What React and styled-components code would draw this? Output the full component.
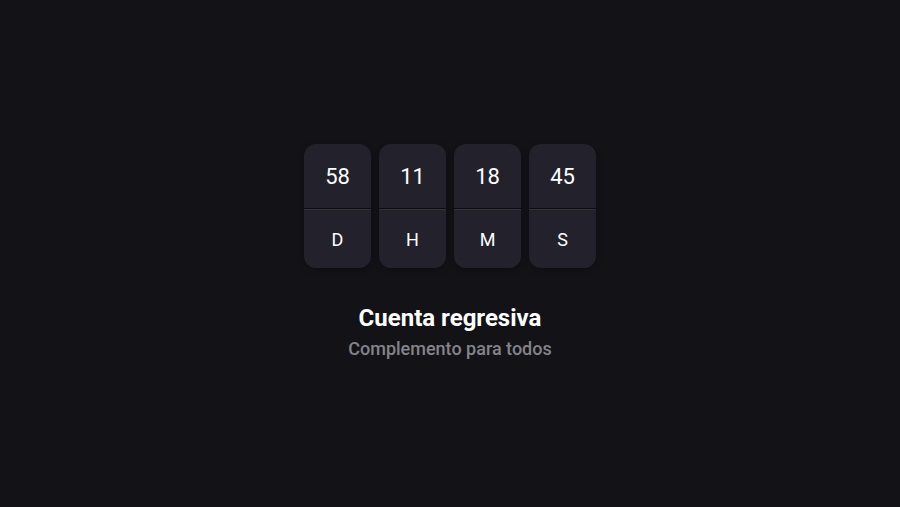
import React from "react";
import styled, { createGlobalStyle } from "styled-components";

const GlobalStyle = createGlobalStyle`
  html, body {
    margin: 0;
    padding: 0;
    background: #131217;
    font-family: Roboto, "Liberation Sans", sans-serif;
  }
`;

const units = [
  { value: "58", label: "D" },
  { value: "11", label: "H" },
  { value: "18", label: "M" },
  { value: "45", label: "S" },
];

const App = () => {
  return (
    <>
      <GlobalStyle />
      <Page>
        <Counter>
          {units.map((u) => (
            <Card key={u.label}>
              <Value>{u.value}</Value>
              <Label>{u.label}</Label>
            </Card>
          ))}
        </Counter>
        <Title>Cuenta regresiva</Title>
        <Subtitle>Complemento para todos</Subtitle>
      </Page>
    </>
  );
};

const Page = styled.div`
  min-height: 100vh;
  display: flex;
  flex-direction: column;
  align-items: center;
  justify-content: center;
  padding-bottom: 3px;
  box-sizing: border-box;
  color: #ffffff;
`;

const Counter = styled.div`
  display: flex;
  gap: 8px;
`;

const Card = styled.div`
  width: 67px;
  height: 124px;
  display: flex;
  flex-direction: column;
  background: #23222c;
  border-radius: 12px;
  overflow: hidden;
  box-shadow: 0 2px 6px rgba(0, 0, 0, 0.25);
`;

const Value = styled.div`
  height: 64px;
  display: flex;
  align-items: center;
  justify-content: center;
  font-size: 22px;
  border-bottom: 1px solid #0d0c10;
`;

const Label = styled.div`
  flex: 1;
  display: flex;
  align-items: center;
  justify-content: center;
  font-size: 18px;
  border-top: 1px solid #34333d;
`;

const Title = styled.h1`
  margin: 36px 0 0;
  font-size: 24px;
  font-weight: 700;
  line-height: 28px;
`;

const Subtitle = styled.p`
  margin: 6px 0 0;
  font-size: 18px;
  font-weight: 500;
  color: #84848a;
  line-height: 22px;
`;

export default App;
